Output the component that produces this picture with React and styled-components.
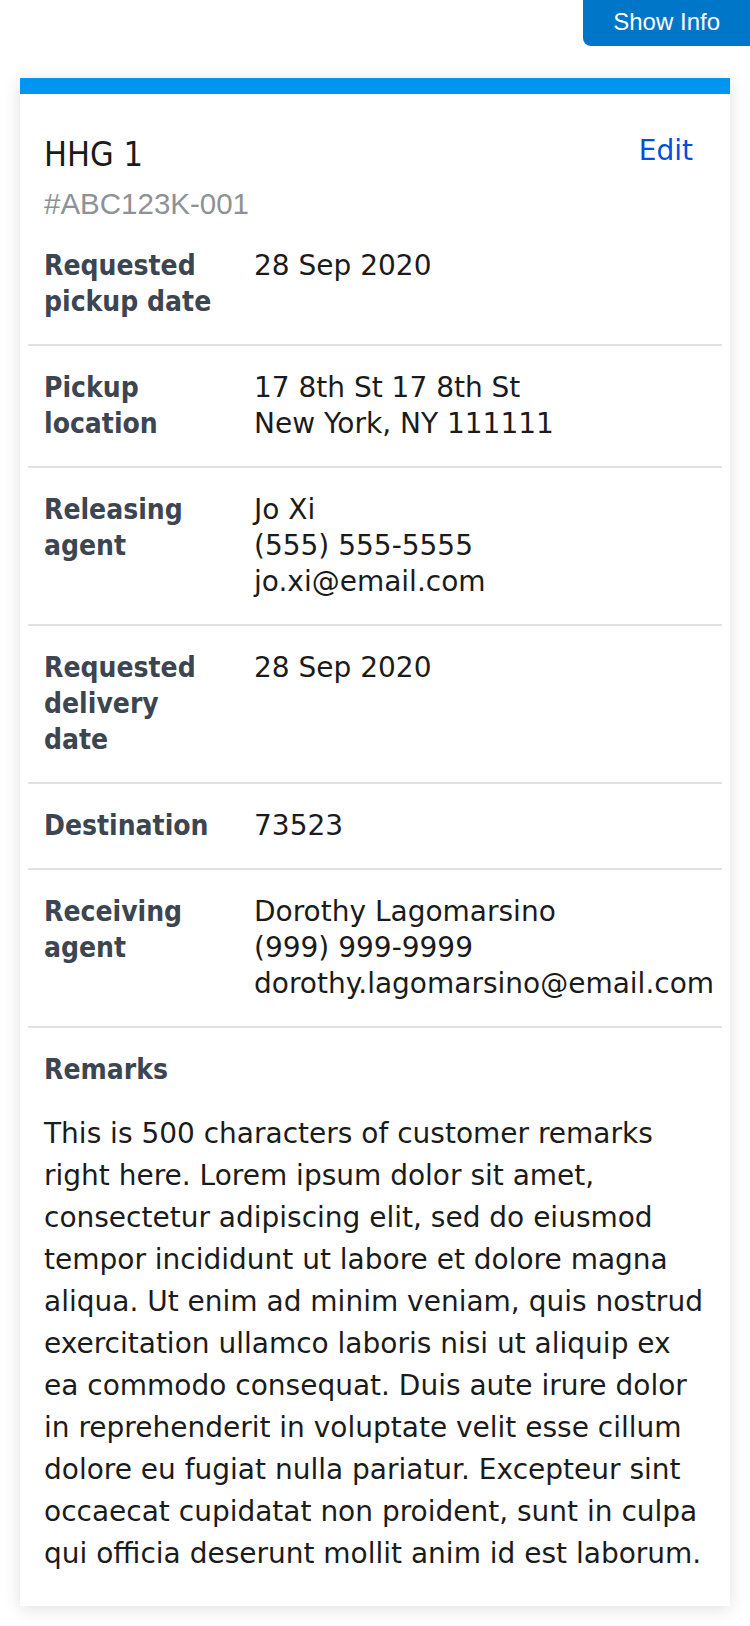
import React from 'react';
import styled, { createGlobalStyle } from 'styled-components';

const GlobalStyle = createGlobalStyle`
    body {
        margin: 0;
        background: #fff;
        font-family: "DejaVu Sans", sans-serif;
    }
`;

const TopBar = styled.div`
    display: flex;
    justify-content: flex-end;
`;

const InfoButton = styled.button`
    height: 46px;
    padding: 0 30px 2px;
    border: 0;
    border-radius: 0 0 0 8px;
    background: #0076c8;
    color: #fff;
    font-family: "Liberation Sans", Arial, sans-serif;
    font-size: 24px;
`;

const Card = styled.section`
    margin: 32px 20px 20px;
    padding: 0 8px 8px;
    background: #fff;
    border-top: 16px solid #0096ef;
    box-shadow: 0 3px 16px rgba(0, 0, 0, 0.12);
`;

const Header = styled.div`
    display: flex;
    justify-content: space-between;
    align-items: flex-start;
    padding: 40px 16px 2px;

    .title {
        margin: 0;
        font-family: "DejaVu Sans Condensed", "DejaVu Sans", sans-serif;
        font-stretch: condensed;
        font-size: 34px;
        line-height: 40px;
        font-weight: 400;
        color: #1b1b1b;
    }

    .number {
        margin-top: 12px;
        font-family: "Liberation Sans", Arial, sans-serif;
        font-size: 29.5px;
        line-height: 36px;
        color: #8d9297;
    }
`;

const EditLink = styled.a`
    margin: 1px 13px 0 0;
    font-size: 28px;
    line-height: 32px;
    color: #0050d8;
    text-decoration: none;
`;

const Row = styled.div`
    display: grid;
    grid-template-columns: 178px 1fr;
    column-gap: 32px;
    padding: 24px 16px;
    border-bottom: 2px solid #dfe1e2;
`;

const Label = styled.div`
    font-family: "DejaVu Sans Condensed", "DejaVu Sans", sans-serif;
    font-stretch: condensed;
    font-weight: 700;
    font-size: 28px;
    line-height: 36px;
    color: #3d4551;
`;

const Value = styled.div`
    font-size: 28px;
    line-height: 36px;
    color: #1b1b1b;
`;

const Remarks = styled.div`
    padding: 24px 16px 23px;

    p {
        margin: 25px 0 0;
        font-size: 28px;
        line-height: 42px;
        color: #1b1b1b;
    }
`;

const details = [
    { label: 'Requested pickup date', lines: ['28 Sep 2020'] },
    { label: 'Pickup location', lines: ['17 8th St 17 8th St', 'New York, NY 111111'] },
    { label: 'Releasing agent', lines: ['Jo Xi', '(555) 555-5555', 'jo.xi@email.com'] },
    { label: 'Requested delivery date', lines: ['28 Sep 2020'] },
    { label: 'Destination', lines: ['73523'] },
    {
        label: 'Receiving agent',
        lines: ['Dorothy Lagomarsino', '(999) 999-9999', 'dorothy.lagomarsino@email.com'],
    },
];

const remarks =
    'This is 500 characters of customer remarks right here. Lorem ipsum dolor sit amet, consectetur adipiscing elit, sed do eiusmod tempor incididunt ut labore et dolore magna aliqua. Ut enim ad minim veniam, quis nostrud exercitation ullamco laboris nisi ut aliquip ex ea commodo consequat. Duis aute irure dolor in reprehenderit in voluptate velit esse cillum dolore eu fugiat nulla pariatur. Excepteur sint occaecat cupidatat non proident, sunt in culpa qui officia deserunt mollit anim id est laborum.';

const App = () => {
    return (
        <>
            <GlobalStyle />
            <TopBar>
                <InfoButton type="button">Show Info</InfoButton>
            </TopBar>
            <Card>
                <Header>
                    <div>
                        <h2 className="title">HHG 1</h2>
                        <div className="number">#ABC123K-001</div>
                    </div>
                    <EditLink href="#">Edit</EditLink>
                </Header>
                {details.map(item => (
                    <Row key={item.label}>
                        <Label>{item.label}</Label>
                        <Value>
                            {item.lines.map(line => (
                                <div key={line}>{line}</div>
                            ))}
                        </Value>
                    </Row>
                ))}
                <Remarks>
                    <Label>Remarks</Label>
                    <p>{remarks}</p>
                </Remarks>
            </Card>
        </>
    );
};

export default App;
